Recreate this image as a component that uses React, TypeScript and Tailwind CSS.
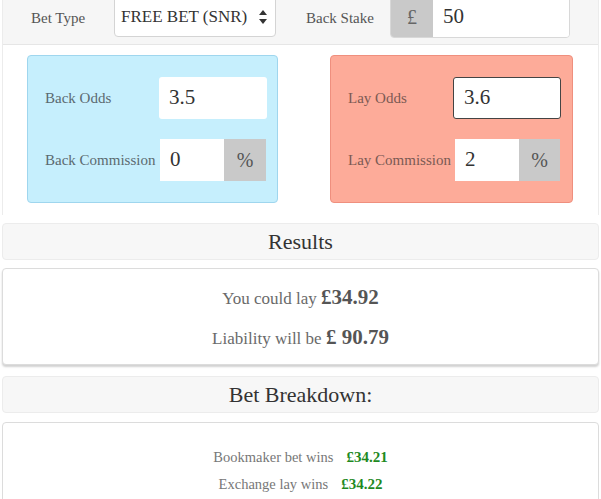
import React from 'react';

const serif = "font-['Liberation_Serif','PT_Serif',serif]";

const Field: React.FC<{ value: string; className?: string }> = ({ value, className }) => (
  <div className={`flex shrink-0 items-center bg-white px-[10px] text-[21px] text-[#333] ${className ?? ''}`}>{value}</div>
);

const Addon: React.FC<{ children: React.ReactNode; className?: string }> = ({ children, className }) => (
  <div className={`flex shrink-0 items-center justify-center bg-[#c9c9c9] text-[20px] text-[#555] ${className ?? ''}`}>{children}</div>
);

const App: React.FC = () => {
  return (
    <div className={`w-[601px] h-[499px] overflow-hidden bg-white ${serif}`}>
      <div className="mx-[2px] border-x border-[#ececec]">
        {/* top settings row */}
        <div className="h-[45px] bg-[#f6f6f6] border-b border-[#e6e6e6] overflow-hidden">
          <div className="flex items-start -mt-[4px]">
            <div className="shrink-0 ml-[28px] w-[83px] pt-[11px] text-[15px] text-[#555] whitespace-nowrap">Bet Type</div>
            <div className="shrink-0 w-[162px] h-[41px] bg-white border border-[#d4d4d4] rounded-[4px] flex items-center justify-between pl-[6px] pr-[8px]">
              <span className="text-[17px] text-[#333]">FREE BET (SNR)</span>
              <svg width="8" height="14" viewBox="0 0 8 14" className="fill-[#333]">
                <path d="M4 0 L8 5 L0 5 Z" />
                <path d="M0 9 L8 9 L4 14 Z" />
              </svg>
            </div>
            <div className="shrink-0 ml-[30px] w-[84px] pt-[11px] text-[15px] text-[#555] whitespace-nowrap">Back Stake</div>
            <div className="shrink-0 flex h-[42px] rounded-[4px] overflow-hidden border border-[#d8d8d8]">
              <Addon className="w-[42px] text-[#666]">£</Addon>
              <Field value="50" className="w-[136px]" />
            </div>
          </div>
        </div>

        {/* back / lay boxes */}
        <div className="flex pt-[10px] pb-[12px] pl-[24px]">
          <div className="shrink-0 w-[251px] h-[148px] bg-[#c6effd] border border-[#9fd6ee] rounded-[4px] pl-[17px] pr-[10px] pt-[21px] flex flex-col gap-[20px]">
            <div className="flex items-center">
              <div className="shrink-0 w-[114px] text-[15px] text-[#5b6a70]">Back Odds</div>
              <Field value="3.5" className="w-[108px] h-[42px] rounded-[3px]" />
            </div>
            <div className="flex items-center">
              <div className="shrink-0 w-[115px] text-[15px] text-[#5b6a70] whitespace-nowrap">Back Commission</div>
              <Field value="0" className="w-[64px] h-[42px]" />
              <Addon className="w-[42px] h-[42px]">%</Addon>
            </div>
          </div>
          <div className="shrink-0 ml-[52px] w-[243px] h-[148px] bg-[#fdab99] border border-[#ef8f7e] rounded-[4px] pl-[17px] pr-[11px] pt-[21px] flex flex-col gap-[20px]">
            <div className="flex items-center">
              <div className="shrink-0 w-[105px] text-[15px] text-[#7b5a54]">Lay Odds</div>
              <Field value="3.6" className="w-[108px] h-[42px] rounded-[3px] border border-[#444]" />
            </div>
            <div className="flex items-center">
              <div className="shrink-0 w-[107px] text-[15px] text-[#7b5a54] whitespace-nowrap">Lay Commission</div>
              <Field value="2" className="w-[64px] h-[42px]" />
              <Addon className="w-[41px] h-[42px]">%</Addon>
            </div>
          </div>
        </div>
      </div>

      {/* Results */}
      <div className="mx-[2px] mt-[8px] h-[37px] bg-[#f7f7f7] border border-[#ececec] rounded-[4px] flex items-center justify-center text-[22px] text-[#333]">
        Results
      </div>
      <div className="mx-[2px] mt-[8px] h-[97px] bg-white border border-[#dcdcdc] rounded-[4px] shadow-[0_2px_2px_rgba(0,0,0,0.18)] flex flex-col items-center pt-[16px] gap-[14px]">
        <div className="text-[17px] text-[#6a6a6a] leading-[24px]">
          You could lay <span className="font-bold text-[21px] text-[#555]">£34.92</span>
        </div>
        <div className="text-[17px] text-[#6a6a6a] leading-[24px]">
          Liability will be <span className="font-bold text-[21px] text-[#555]">£ 90.79</span>
        </div>
      </div>

      {/* Bet Breakdown */}
      <div className="mx-[2px] mt-[11px] h-[37px] bg-[#f7f7f7] border border-[#ececec] rounded-[4px] flex items-center justify-center text-[22px] text-[#333]">
        Bet Breakdown:
      </div>
      <div className="mx-[2px] mt-[9px] h-[100px] bg-white border border-[#dcdcdc] rounded-[4px] flex flex-col items-center pt-[24px] gap-[7px]">
        <div className="flex items-center gap-[13px] leading-[20px]">
          <span className="text-[14.5px] text-[#777]">Bookmaker bet wins</span>
          <span className="font-bold text-[15px] text-[#1f8a1f]">£34.21</span>
        </div>
        <div className="flex items-center gap-[13px] leading-[20px]">
          <span className="text-[14.5px] text-[#777]">Exchange lay wins</span>
          <span className="font-bold text-[15px] text-[#1f8a1f]">£34.22</span>
        </div>
      </div>
    </div>
  );
};

export default App;
